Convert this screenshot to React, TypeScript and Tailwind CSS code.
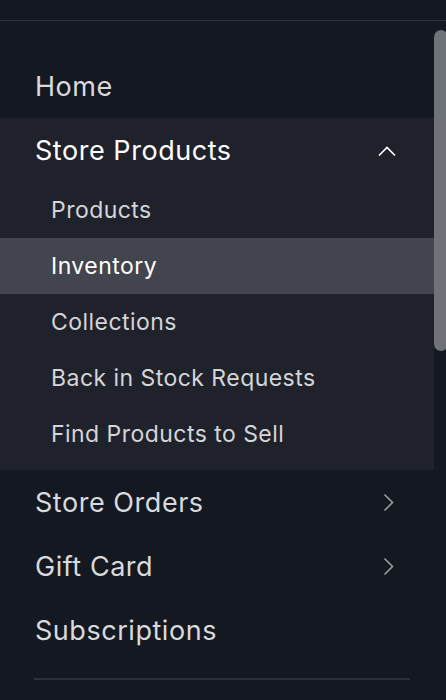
import React from "react";

const ChevronUp = () => (
  <svg width="20" height="12" viewBox="0 0 20 12" fill="none">
    <path d="M2 10.5L10 2.5L18 10.5" stroke="#ffffff" strokeWidth="1.6" />
  </svg>
);

const ChevronRight = () => (
  <svg width="12" height="20" viewBox="0 0 12 20" fill="none">
    <path d="M2.5 1.5L10.5 9.5L2.5 17.5" stroke="#9b9da2" strokeWidth="1.6" />
  </svg>
);

const sub = ["Products", "Inventory", "Collections", "Back in Stock Requests", "Find Products to Sell"];

export default function App() {
  return (
    <div
      className="relative w-[446px] h-[700px] overflow-hidden bg-[#141820]"
      style={{ fontFamily: "Inter, 'Open Sans', sans-serif" }}
    >
      <div className="h-[20px]" />
      <div className="h-px bg-[#30333b]" />
      <div className="h-[33px]" />
      <nav className="flex flex-col pr-[12px]">
        <div className="h-[64px] pt-[2px] flex items-center pl-[35px] text-[27px] tracking-[0.02em] text-[#d9dadd]">Home</div>
        <div className="bg-[#20222b] pb-[8px]">
          <div className="h-[64px] pt-[2px] flex items-center justify-between pl-[35px] pr-[37px] text-[27px] tracking-[0.02em] text-white">
            <span>Store Products</span>
            <ChevronUp />
          </div>
          {sub.map((s) => (
            <div
              key={s}
              className={
                s === "Inventory"
                  ? "h-[56px] flex items-center pl-[51px] text-[23px] tracking-[0.02em] text-white bg-[#42454e]"
                  : "h-[56px] flex items-center pl-[51px] text-[23px] tracking-[0.02em] text-[#d4d5d8]"
              }
            >
              {s}
            </div>
          ))}
        </div>
        <div className="h-[64px] pt-[2px] flex items-center justify-between pl-[35px] pr-[40px] text-[27px] tracking-[0.02em] text-[#d9dadd]">
          <span>Store Orders</span>
          <ChevronRight />
        </div>
        <div className="h-[64px] pt-[2px] flex items-center justify-between pl-[35px] pr-[40px] text-[27px] tracking-[0.02em] text-[#d9dadd]">
          <span>Gift Card</span>
          <ChevronRight />
        </div>
        <div className="h-[64px] pt-[2px] flex items-center pl-[35px] text-[27px] tracking-[0.02em] text-[#d9dadd]">Subscriptions</div>
        <div className="mt-[16px] ml-[34px] mr-[24px] h-[2px] bg-[#2c2f37]" />
      </nav>
      <div className="absolute left-[434px] top-[30px] w-[14px] h-[321px] rounded-[7px] bg-[#6f7278]" />
    </div>
  );
}
